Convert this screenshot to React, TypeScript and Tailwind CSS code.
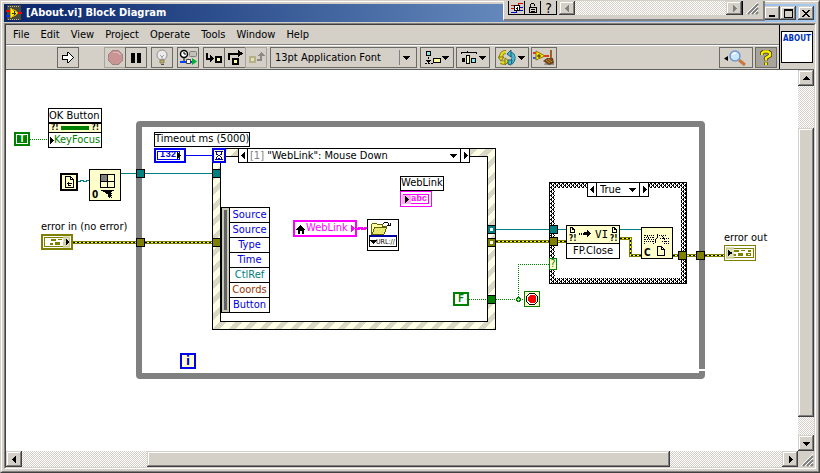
import type { ReactNode } from "react";
import { clsx } from "clsx";

const raised =
  "bg-[#d4d0c8] shadow-[inset_-1px_-1px_0_#404040,inset_1px_1px_0_#d4d0c8,inset_-2px_-2px_0_#808080,inset_2px_2px_0_#fff]";
const track = "bg-[conic-gradient(#fff_25%,#d4d0c8_0_50%,#fff_0_75%,#d4d0c8_0)] bg-size-[2px_2px]";
const stripes = "bg-[repeating-linear-gradient(135deg,#ffffe6_0_6px,#d8d8c4_6px_11px)]";

const menus = ["File", "Edit", "View", "Project", "Operate", "Tools", "Window", "Help"];

const eventData = [
  { name: "Source", color: "text-[#0000e0]" },
  { name: "Source", color: "text-[#0000e0]" },
  { name: "Type", color: "text-[#0000e0]" },
  { name: "Time", color: "text-[#0000e0]" },
  { name: "CtlRef", color: "text-[#008080]" },
  { name: "Coords", color: "text-[#993300]" },
  { name: "Button", color: "text-[#0000e0]" },
];

type Dir = "up" | "down" | "left" | "right";

function Arrow({ dir, className }: { dir: Dir; className?: string }) {
  const d = {
    up: "M4 2h1v1h1v1h1v1h1v1H1V5h1V4h1V3h1z",
    down: "M1 3h7v1H7v1H6v1H5v1H4V6H3V5H2V4H1z",
    left: "M6 1v7H5V7H4V6H3V5H2V4h1V3h1V2h1V1z",
    right: "M3 1v7h1V7h1V6h1V5h1V4H6V3H5V2H4V1z",
  }[dir];
  return (
    <svg viewBox="0 0 9 9" className={clsx("size-[9px] shrink-0", className)} fill="currentColor" shapeRendering="crispEdges" aria-hidden>
      <path d={d} />
    </svg>
  );
}

function Icon({ w, h, children }: { w: number; h: number; children: ReactNode }) {
  return (
    <svg width={w} height={h} viewBox={`0 0 ${w} ${h}`} fill="none" shapeRendering="crispEdges" className="shrink-0 overflow-visible" aria-hidden>
      {children}
    </svg>
  );
}

function ToolButton(props: { label: string; className: string; disabled?: boolean; children: ReactNode }) {
  return (
    <button
      type="button"
      aria-label={props.label}
      disabled={props.disabled}
      className={clsx(
        "flex h-[21px] shrink-0 items-center justify-center border",
        props.disabled ? "border-[#a8a49c]" : "border-[#6c6a66]",
        props.className
      )}
    >
      {props.children}
    </button>
  );
}

function LabviewIcon() {
  return (
    <Icon w={16} h={16}>
      <path d="M1 0h14v15H1z" fill="#4a4a3c" />
      <path d="M2 1h12M2 14h12" stroke="#b8b8a0" strokeDasharray="1 1" />
      <path d="M4 3l9 5-9 5z" fill="#ffee00" stroke="#c8a800" />
      <path d="M0 5.500h4M12 7.500h4" stroke="#f00000" strokeWidth="2" />
      <path d="M0 10.500h4" stroke="#0030ff" strokeWidth="2" />
      <path d="M6 8h4M8 6v4" stroke="#303000" />
    </Icon>
  );
}

function TitleBar() {
  return (
    <header className="flex h-[18px] items-center bg-linear-to-r from-[#0a246a] to-[#a6caf0] pl-0.5 pr-0.5">
      <LabviewIcon />
      <h1 className="ml-1 flex-1 text-[11px] leading-[18px] font-bold whitespace-nowrap text-white">[About.vi] Block Diagram</h1>
      <button type="button" aria-label="Minimize" className={clsx("flex h-[14px] w-4 items-center justify-center", raised)}>
        <Icon w={8} h={8}>
          <path d="M1 6h6v2H1z" fill="#000" />
        </Icon>
      </button>
      <button type="button" aria-label="Maximize" className={clsx("flex h-[14px] w-4 items-center justify-center", raised)}>
        <Icon w={9} h={9}>
          <path d="M0 0h9v9H0zM1 2v6h7V2z" fill="#000" fillRule="evenodd" />
        </Icon>
      </button>
      <button type="button" aria-label="Close" className={clsx("ml-0.5 flex h-[14px] w-4 items-center justify-center", raised)}>
        <Icon w={8} h={7}>
          <path d="M0 0h2v1h1v1h2V1h1V0h2v1H7v1H6v1H5v1h1v1h1v1h1v1H6V6H5V5H3v1H2v1H0V6h1V5h1V4h1V3H2V2H1V1H0z" fill="#000" />
        </Icon>
      </button>
    </header>
  );
}

function Grip() {
  return (
    <svg viewBox="0 0 16 16" className="size-4 shrink-0 bg-[#d4d0c8]" aria-hidden>
      <path d="M5 15L15 5M9 15l6-6M13 15l2-2" stroke="#808080" strokeWidth="2" />
      <path d="M3 15L15 3M7 15l8-8M11 15l4-4" stroke="#fff" />
    </svg>
  );
}

// floating tool strip that hangs over the title bar
function ToolStrip() {
  const cell = "flex h-[14px] w-4 items-center justify-center border-r border-b border-black bg-[#d4d0c8]";
  return (
    <div className="absolute top-0 right-[54px] flex h-5 w-[262px] border-r-2 border-b-2 border-l border-[#808080] border-l-white bg-[#d4d0c8] pr-1 pl-1">
      <div className="flex h-[14px] w-full border-l border-black">
        <button type="button" aria-label="Connections" className={cell}>
          <Icon w={14} h={12}>
            <path d="M1 3.500h4M1 6.500h4" stroke="#e00000" />
            <path d="M1 10.500h5v-2M9 5.500h4M9 8.500h4" stroke="#0000e0" />
            <path d="M8 2.500V1h5" stroke="#e00000" />
            <path d="M4.500 3.500h5v5h-5z" fill="#fff" stroke="#000" />
            <path d="M6 6.500h2M7.500 5v3" stroke="#000" />
          </Icon>
        </button>
        <button type="button" aria-label="Lock" className={cell}>
          <Icon w={10} h={12}>
            <path d="M2.500 5V2.500l1-1h2l1 1V4" stroke="#000" />
            <path d="M1.500 5.500h7v5h-7zM3 7.500h4M3 9.500h4" stroke="#000" />
          </Icon>
        </button>
        <button type="button" aria-label="Help" className={clsx(cell, "text-[14px] leading-3")}>
          ?
        </button>
        <button type="button" aria-label="Scroll left" className={clsx("ml-0.5 flex w-4 items-center justify-center text-[#808080]", raised)}>
          <Arrow dir="left" />
        </button>
        <div className={clsx("flex-1", track)} />
        <button type="button" aria-label="Scroll right" className={clsx("flex w-4 items-center justify-center text-[#808080]", raised)}>
          <Arrow dir="right" />
        </button>
        <div className="flex h-[14px] items-end overflow-hidden border-l border-black">
          <Grip />
        </div>
      </div>
    </div>
  );
}

function Toolbar() {
  return (
    <div className="flex h-6 items-center border-t border-white pr-0.5 pl-[51px]">
      <ToolButton label="Run" className="w-[22px]">
        <Icon w={14} h={13}>
          <path d="M1.500 4.500h5v-3l1 0 5 5-5 5-1 0v-3h-5z" fill="#fff" stroke="#000" />
        </Icon>
      </ToolButton>
      <ToolButton label="Abort" disabled className="ml-[25px] w-[22px]">
        <Icon w={15} h={15}>
          <path d="M4.500.500h6l4 4v6l-4 4h-6l-4-4v-6z" fill="#c89494" stroke="#a08484" />
          <path d="M5 2.500h5l2.500 2.500" stroke="#dcb4b4" />
        </Icon>
      </ToolButton>
      <ToolButton label="Pause" className="-ml-px w-[22px]">
        <Icon w={10} h={10}>
          <path d="M0 0h4v10H0zM6 0h4v10H6z" fill="#000" />
        </Icon>
      </ToolButton>
      <ToolButton label="Highlight execution" className="ml-1 w-[22px]">
        <svg viewBox="0 0 14 17" className="h-[17px] w-[14px]" fill="none" aria-hidden>
          <circle cx="7" cy="6" r="5" fill="#ececec" stroke="#909090" />
          <path d="M5 6l2 2 2-2M7 8v3" stroke="#a0a0a0" />
          <path d="M5 11h4v3H5z" fill="#c8b060" stroke="#84805c" />
          <path d="M6 15.500h3" stroke="#505050" />
        </svg>
      </ToolButton>
      <ToolButton label="Retain wire values" className="ml-1 w-[22px]">
        <svg viewBox="0 0 18 17" className="h-[17px] w-[18px]" fill="none" aria-hidden>
          <circle cx="5" cy="5" r="3.500" fill="#fff" stroke="#000" strokeWidth="1.500" />
          <path d="M5 3v2h2M5 9v4" stroke="#000" />
          <rect x="10.500" y="2.500" width="7" height="5" rx="1" fill="#c4c0b8" stroke="#808080" />
          <path d="M1 13h13" stroke="#0040ff" strokeWidth="2" />
          <path d="M7.500 10.500h4v4h-4z" fill="#fff" stroke="#404040" />
          <path d="M13 9v7l5-3.500z" fill="#00b030" />
        </svg>
      </ToolButton>
      <ToolButton label="Step into" className="ml-1 w-[22px]">
        <Icon w={18} h={14}>
          <path d="M2 2v6h5" stroke="#000" strokeWidth="2" />
          <path d="M5 4v7l4-3.500z" fill="#000" />
          <path d="M11 6h5v5h-5z" fill="#ffffa0" stroke="#000" strokeWidth="2" />
        </Icon>
      </ToolButton>
      <ToolButton label="Step over" className="-ml-px w-[22px]">
        <Icon w={17} h={16}>
          <path d="M2 10V4h11" stroke="#000" strokeWidth="2" />
          <path d="M11 0v7l5-3.500z" fill="#000" />
          <path d="M6 9h5v5H6z" fill="#ffffa0" stroke="#000" strokeWidth="2" />
        </Icon>
      </ToolButton>
      <ToolButton label="Step out" disabled className="-ml-px w-[22px]">
        <Icon w={17} h={14}>
          <path d="M2 6h5v5H2z" fill="#e4e0b0" stroke="#b4b088" strokeWidth="2" />
          <path d="M9 9h4V4" stroke="#8c8a84" strokeWidth="2" />
          <path d="M10 5h7l-3.500-4z" fill="#8c8a84" />
        </Icon>
      </ToolButton>
      <div className="relative ml-[3px] h-[21px] w-[147px] shrink-0 border border-[#6c6a66]">
        <select aria-label="Text settings" className="h-full w-full appearance-none pl-1 text-[11px] leading-[19px] outline-none">
          <option>13pt Application Font</option>
        </select>
        <span className="pointer-events-none absolute inset-y-0.5 right-0 flex w-[17px] items-center justify-center border-l border-[#808080] pr-1">
          <Arrow dir="down" />
        </span>
      </div>
      <ToolButton label="Align objects" className="ml-[3px] w-[34px]">
        <Icon w={17} h={16}>
          <path d="M2.500 1.500h4v4h-4z" fill="#80e8f0" stroke="#000" />
          <path d="M4.500 7v5M1 13.500h8" stroke="#000" strokeDasharray="2 1" />
          <path d="M2 10h5v1H6v1H5v1H4v-1H3v-1H2z" fill="#000" />
          <path d="M9.500 8.500h7v4h-7z" fill="#ffffa0" stroke="#000" />
        </Icon>
        <Arrow dir="down" />
      </ToolButton>
      <ToolButton label="Distribute objects" className="ml-0.5 w-[34px]">
        <Icon w={18} h={16}>
          <path d="M1.500 4V2.500h6V1M7.500 2.500h9V4" stroke="#000" />
          <path d="M2 8h3v4H2z" fill="#000" />
          <path d="M6.500 5.500h3v8h-3z" fill="#ffffa0" stroke="#000" />
          <path d="M11.500 8.500h4v4h-4z" fill="#80e8f0" stroke="#000" />
        </Icon>
        <Arrow dir="down" />
      </ToolButton>
      <ToolButton label="Reorder" className="ml-[5px] w-[34px]">
        <svg viewBox="0 0 19 16" className="h-4 w-[19px] shrink-0" fill="none" aria-hidden>
          <path d="M8 2C4 2 3 4 3 8" stroke="#807800" strokeWidth="4" />
          <path d="M3 12c2 1 3 1 5 0" stroke="#807800" strokeWidth="4" />
          <path d="M8 2C4 2 3 4 3 8M3 12c2 1 3 1 5 0" stroke="#e8d828" strokeWidth="2.500" />
          <path d="M0 7h6l-3 4zM7 8v7l4-4z" fill="#e8d828" stroke="#807800" />
          <path d="M12 4c4 0 5 5 1 9" stroke="#186078" strokeWidth="4" />
          <path d="M12 4c4 0 5 5 1 9" stroke="#48b8d0" strokeWidth="2.500" />
          <path d="M13 0v7L9 4zM10 10h4l-1 5-3-1z" fill="#48b8d0" stroke="#186078" />
        </svg>
        <Arrow dir="down" />
      </ToolButton>
      <ToolButton label="Clean up diagram" className="ml-0.5 w-[26px]">
        <svg viewBox="0 0 24 18" className="h-[18px] w-6" fill="none" aria-hidden>
          <path d="M1 4h4M11 7h6" stroke="#f00000" strokeWidth="1.500" />
          <path d="M1 9h4" stroke="#0030ff" strokeWidth="1.500" />
          <path d="M4 2l9 5-9 4z" fill="#ffee00" stroke="#907000" />
          <path d="M7 5v4M5 7h4" stroke="#302800" />
          <path d="M12 16h10v-2h-9z" fill="#909088" />
          <path d="M18 1h2v8h-2z" fill="#a06020" />
          <path d="M15 9h6l1 5-5 2-6-4z" fill="#70441c" />
          <path d="M14 11l4 3M16 10l4 3" stroke="#c89028" />
        </svg>
      </ToolButton>
      <div className="flex-1" />
      <ToolButton label="Search" className="w-[34px]">
        <svg viewBox="0 0 26 18" className="h-[18px] w-[26px]" fill="none" aria-hidden>
          <path d="M5 7v5L1 9.500z" fill="#000" />
          <path d="M16 11l6 5" stroke="#c87840" strokeWidth="3" />
          <circle cx="12" cy="7" r="5" fill="#cce8ff" stroke="#7098d0" strokeWidth="1.500" />
          <path d="M9 6c1-2 2-2 4-2" stroke="#fff" strokeWidth="1.500" />
        </svg>
      </ToolButton>
      <button
        type="button"
        aria-label="Context help"
        aria-pressed
        className="ml-0.5 flex h-[21px] w-[22px] items-center justify-center border border-[#6c6a66] bg-[#a8a49c]"
      >
        <svg viewBox="0 0 12 16" className="h-4 w-3" fill="none" aria-hidden>
          <path d="M2 5V3l2-1.500h4L10 3v2.500L6 8v2.500M6 12.500v2.500" stroke="#303000" strokeWidth="4" />
          <path d="M2 5V3l2-1.500h4L10 3v2.500L6 8v2.500M6 12.500v2.500" stroke="#ffee00" strokeWidth="2.500" />
        </svg>
      </button>
    </div>
  );
}

function Wires() {
  const error = ["M67 172.500H206", "M490 171.500H560", "M614 168.500H624.500V185.500H635", "M667 185.500H718"];
  return (
    <svg className="absolute top-0 left-0 h-[381px] w-[792px]" fill="none" shapeRendering="crispEdges" aria-hidden>
      <path d="M115 103.500H206M490 159.500H560M614 159.500H635" stroke="#008080" />
      <path d="M72 111.500h2v-1h3v1h3v-1h3" stroke="#008080" />
      <path d="M180 85.500H206" stroke="#0000f0" />
      {error.map((d) => (
        <g key={d}>
          <path d={d} stroke="#808000" strokeWidth="3" />
          <path d={d} stroke="#ffff20" />
          <path d={d} stroke="#000" strokeDasharray="2 2" />
        </g>
      ))}
      <path d="M24 69.500H42M463 229.500H481M490 229.500H518M512.500 229V194.500H543" stroke="#008000" strokeDasharray="1 1" />
      <path d="M511 227h3v1h1v3h-1v1h-3v-1h-1v-3h1z" fill="#008000" />
      <path d="M511 229h3M512.500 228v3" stroke="#b0e0b0" />
      <path d="M351 158.500h2v-1h3v1h3v-1h2" stroke="#f0f" strokeWidth="2" />
    </svg>
  );
}

function Tunnel({ className, hollow }: { className: string; hollow?: boolean }) {
  return (
    <div className={clsx("absolute flex size-[9px] items-center justify-center border border-black", className)}>
      {hollow && <i className="size-[3px] bg-white" />}
    </div>
  );
}

function Label({ className, children }: { className: string; children: ReactNode }) {
  return (
    <div className={clsx("absolute flex h-[15px] items-center border border-black bg-white whitespace-nowrap", className)}>
      {children}
    </div>
  );
}

function ErrorCluster({ className, out }: { className: string; out?: boolean }) {
  return (
    <div className={clsx("absolute h-4 w-8 border-[#808000] bg-white", out ? "border" : "border-2", className)}>
      <svg viewBox="0 0 28 12" className="h-full w-full" fill="none" shapeRendering="crispEdges" aria-hidden>
        <path d="M1.500 1.500h25v9h-25z" stroke="#808000" />
        <path d="M8 3h5v2H8zM15 3h4v1h-4zM21 3h3v2h-3zM7 7h3v2H7zM12 6h5v3h-5zM20 6h4v3h-4z" fill="#808000" />
        <path d="M21 7h2v1h-2z" fill="#fff" />
        <path d={out ? "M1 0h7v12H1z" : "M20 0h7v12h-7z"} fill="#d8d8b4" fillOpacity=".8" />
        <path d={out ? "M3 3v6l4-3z" : "M23 3v6l4-3z"} fill="#000" />
      </svg>
    </div>
  );
}

function EventStructure() {
  return (
    <div className={clsx("absolute top-[78px] left-[206px] h-[182px] w-[284px] border border-black p-[7px]", stripes)}>
      <div className="h-full w-full border border-black bg-white" />
      <div className="absolute -top-px left-[25px] flex h-[15px] w-[232px] items-center border border-black bg-white">
        <button type="button" aria-label="Previous event case" className="flex w-2 justify-center">
          <Arrow dir="left" />
        </button>
        <button
          type="button"
          aria-haspopup="listbox"
          className="flex h-[13px] flex-1 items-center justify-between border-x border-black pr-0.5 pl-0.5 leading-[13px] whitespace-nowrap"
        >
          <span>
            <span className="text-[#808080]">[1]</span> "WebLink": Mouse Down
          </span>
          <Arrow dir="down" />
        </button>
        <button type="button" aria-label="Next event case" className="flex w-2 justify-center">
          <Arrow dir="right" />
        </button>
      </div>
      <div className="absolute top-[58px] left-2 flex border border-black bg-[#c8c8b8]">
        <div className="w-[7px] bg-[#c8c8b8] py-0.5 pl-0.5">
          <div className="h-full w-[3px] bg-[#606060]" />
        </div>
        <ul className="w-10 divide-y divide-black border-l border-black bg-white text-center leading-[14px]">
          {eventData.map((e, i) => (
            <li key={i} className={e.color}>
              {e.name}
            </li>
          ))}
        </ul>
      </div>
    </div>
  );
}

function CaseStructure() {
  return (
    <div className="absolute top-[112px] left-[543px] h-[102px] w-[138px] border border-black p-[5px]">
      <svg className="absolute inset-0 h-full w-full" shapeRendering="crispEdges" aria-hidden>
        <pattern id="hatch" width="4" height="4" patternUnits="userSpaceOnUse">
          <path d="M0 0h4v4H0z" fill="#fff" />
          <path d="M0 0h2v1H0zM1 1h1v1H1zM3 1h1v1H3zM2 2h2v1H2zM1 3h1v1H1zM3 3h1v1H3z" fill="#000" />
        </pattern>
        <rect width="100%" height="100%" fill="url(#hatch)" />
      </svg>
      <div className="relative h-full w-full bg-white" />
      <div className="absolute -top-px left-[37px] flex h-[15px] w-[62px] items-center border border-black bg-white">
        <button type="button" aria-label="Previous case" className="flex w-2 justify-center">
          <Arrow dir="left" />
        </button>
        <div className="relative flex h-[13px] flex-1 border-x border-black">
          <select aria-label="Case" className="w-full appearance-none pl-[3px] leading-[13px] outline-none">
            <option>True</option>
            <option>False</option>
          </select>
          <Arrow dir="down" className="pointer-events-none absolute top-0.5 right-0.5" />
        </div>
        <button type="button" aria-label="Next case" className="flex w-2 justify-center">
          <Arrow dir="right" />
        </button>
      </div>
    </div>
  );
}

function PageGlyph({ x, y }: { x: number; y: number }) {
  return <path transform={`translate(${x} ${y})`} d="M.500.500h2l2 2v3h-4zM2.500.500v2h2" stroke="#000" />;
}

function Diagram() {
  return (
    <main className="relative min-w-0 flex-1 overflow-hidden bg-white">
      {/* while loop */}
      <div className="absolute top-[51px] left-[130px] h-[258px] w-[569px] rounded-[4px] border-6 border-[#808080]" />
      <div className="absolute top-[299px] left-[693px] h-0.5 w-[6px] bg-white" />
      <EventStructure />
      <CaseStructure />
      <Wires />

      <Tunnel className="top-[99px] left-[130px] bg-[#008080]" />
      <Tunnel className="top-[99px] left-[206px] bg-[#008080]" />
      <Tunnel className="top-[168px] left-[130px] bg-[#808000]" />
      <Tunnel className="top-[168px] left-[206px] bg-[#808000]" />
      <Tunnel hollow className="top-[155px] left-[481px] bg-[#008080]" />
      <Tunnel hollow className="top-[168px] left-[481px] bg-[#808000]" />
      <Tunnel className="top-[225px] left-[481px] bg-[#008000]" />
      <Tunnel className="top-[155px] left-[543px] bg-[#008080]" />
      <Tunnel className="top-[167px] left-[543px] bg-[#808000]" />
      <Tunnel className="top-[181px] left-[672px] bg-[#808000]" />
      <Tunnel className="top-[181px] left-[690px] bg-[#808000]" />

      {/* property node */}
      <div className="absolute top-[62px] left-2 flex h-[14px] w-4 border-2 border-[#008000] bg-white p-px">
        <span className="w-full bg-[#008000] text-center font-['DejaVu_Sans_Mono',monospace] text-[10px] leading-2 font-bold text-white">T</span>
      </div>
      <div className="absolute top-[38px] left-[42px] h-10 w-[54px] border border-black bg-white whitespace-nowrap">
        <div className="h-[14px] border-b border-black leading-[13px]">OK Button</div>
        <div className="flex h-[10px] items-center justify-between border-y border-black bg-[#ffffcc] px-0.5 text-[8px] leading-2 font-bold">
          <span>?!</span>
          <span className="h-1 w-7 bg-[#008000]" />
          <span>?!</span>
        </div>
        <div className="flex items-center leading-[14px] text-[#008000]">
          <Arrow dir="right" className="-ml-0.5 text-black" />
          <span className="-ml-0.5">KeyFocus</span>
        </div>
      </div>

      {/* open reference */}
      <div className="absolute top-[103px] left-[54px] flex size-[18px] items-center justify-center border-2 border-black bg-[#ffffcc]">
        <Icon w={11} h={12}>
          <path d="M1.500.500h5l3 3v8h-8zM6.500.500v3h3M3 7.500h5M4.500 6v3h2" stroke="#000" />
        </Icon>
      </div>
      <div className="absolute top-[99px] left-[83px] size-8 border border-black bg-[#ffffcc]">
        <Icon w={30} h={30}>
          <path d="M10 4h7v7h-7z" fill="#808080" />
          <path d="M10.500 4.500h14v13h-14zM17.500 4v14M10 11.500h15M11 20.500h13" stroke="#000" />
          <path d="M12 20h9v2h-8zM14 22h7v2h-5zM18 24h3v3h-3z" fill="#000" />
          <path d="M21.500 21v6h-3" stroke="#000" strokeDasharray="1 1" />
          <text x="2" y="28" fill="#000" fontSize="10" fontWeight="bold">0</text>
        </Icon>
      </div>

      <span className="absolute top-[149px] left-[35px] leading-4 whitespace-nowrap">error in (no error)</span>
      <ErrorCluster className="top-[164px] left-[35px]" />

      {/* timeout */}
      <Label className="top-[62px] left-[148px]">Timeout ms (5000)</Label>
      <div className="absolute top-[78px] left-[148px] flex h-[15px] w-8 items-center border-2 border-[#0000f0] bg-white p-px">
        <span className="h-[9px] w-[25px] border border-[#0000f0] pl-0.5 font-['Liberation_Mono',monospace] text-[9px] leading-[7px] font-bold text-[#0000f0]">
          I32
        </span>
        <Arrow dir="right" className="-ml-1.5" />
      </div>
      <div className="absolute top-[78px] left-[206px] flex h-[15px] w-[14px] items-center justify-center border-2 border-[#0000f0] bg-[#ffffcc]">
        <Icon w={8} h={9}>
          <path d="M0 .500h8M0 8.500h8M1.500 1v2l2 1.500-2 2v2M6.500 1v2l-2 1.500 2 2v2M3 7.500h2" stroke="#0000a0" />
        </Icon>
      </div>

      {/* local variable and browser call */}
      <div className="absolute top-[150px] left-[287px] flex h-[17px] w-16 items-center border-2 border-[#f0f] bg-white text-[#f0f]">
        <Icon w={11} h={10}>
          <path d="M5 1h1v1h1v1h1v1h1v1h1v1H9v4H7V7H5v3H3V6H1V5h1V4h1V3h1V2h1z" fill="#000" />
        </Icon>
        <span>WebLink</span>
        <Arrow dir="right" />
      </div>
      <div className="absolute top-[149px] left-[361px] size-8 border border-black bg-white">
        <Icon w={30} h={17}>
          <path d="M3.500 14.500v-10l1-1h4l1 1h5v2h4l-4 8z" fill="#ffffa0" stroke="#606000" />
          <path d="M4 14l3-7h12l-3 7z" fill="#e8e870" stroke="#606000" />
          <path d="M14.500 4.500l2-2h3l2 3M19 5.500h3v-3" stroke="#000" />
        </Icon>
        <div className="-mt-0.5 mx-px flex h-3 items-center border border-t-2 border-black border-t-[#0000a0] text-[7px] leading-2">
          <Arrow dir="down" className="-ml-px" />
          <span className="-ml-0.5">URL://</span>
        </div>
      </div>

      <Label className="top-[106px] left-[394px]">WebLink</Label>
      <div className="absolute top-[121px] left-[394px] h-4 w-8 border border-[#f0f] bg-white p-0.5">
        <div className="flex h-[10px] items-center border border-[#f0f]">
          <Arrow dir="right" className="-ml-0.5 bg-[#f8b0f0]" />
          <span className="font-['Liberation_Mono',monospace] text-[9px] leading-2 font-bold text-[#f0f]">abc</span>
        </div>
      </div>

      {/* stop logic */}
      <div className="absolute top-[222px] left-[447px] h-[14px] w-4 border-2 border-[#008000] bg-white text-center font-['DejaVu_Sans_Mono',monospace] text-[10px] leading-[10px] font-bold text-[#008000]">
        F
      </div>
      <div className="absolute top-[221px] left-[518px] flex size-4 items-center justify-center border border-[#008000] bg-[#ffffcc]">
        <Icon w={12} h={12}>
          <path d="M3.500.500h5l3 3v5l-3 3h-5l-3-3v-5z" fill="#fff" stroke="#000" />
          <path d="M4 2h4l2 2v4l-2 2H4L2 8V4z" fill="#f00" />
        </Icon>
      </div>
      <div className="absolute top-[188px] left-[543px] h-3 w-2 border border-[#008000] bg-[#ffffcc] text-center text-[10px] leading-[10px] text-[#008000]">
        ?
      </div>
      <div className="absolute top-[283px] left-[174px] size-4 border-2 border-[#0000f0] bg-[#ffffcc] text-center text-[13px] leading-3 font-bold text-[#0000f0]">
        i
      </div>

      {/* FP.Close */}
      <div className="absolute top-[155px] left-[560px] h-[34px] w-[54px] border border-black bg-white text-center">
        <div className="h-[18px] border-b border-black bg-[#ffffcc]">
          <Icon w={52} h={17}>
            <PageGlyph x={3} y={1} />
            <PageGlyph x={45} y={1} />
            <path d="M12 7.500h8" stroke="#000" strokeWidth="2" strokeDasharray="1 1" />
            <path d="M17 6h3V4l4 3.500-4 3.500V9h-3z" fill="#000" />
            <text x="28" y="12" fill="#000" fontSize="11" fontFamily="DejaVu Sans Mono">VI</text>
            <text x="2" y="15" fill="#000" fontSize="8" fontWeight="bold">?!</text>
            <text x="43" y="15" fill="#000" fontSize="8" fontWeight="bold">?!</text>
          </Icon>
        </div>
        <div className="leading-[14px]">FP.Close</div>
      </div>

      {/* close reference */}
      <div className="absolute top-[157px] left-[635px] size-8 border border-black bg-[#ffffcc]">
        <Icon w={30} h={30}>
          <path d="M3 7.500h8M2 9.500h10M3 11.500h8M2 13.500h10M17 7.500h7M18 10.500h9M20 13.500h8M22 15.500h6" stroke="#000" strokeDasharray="1 1" />
          <path d="M2.500 7v9M11.500 7v9M5 8l3 4M20 8l4 6" stroke="#000" strokeDasharray="1 1" />
          <path d="M13.500 15v-3l2-3V6" stroke="#000" />
          <path d="M15.500 18.500h4l3 3v6h-7zM19.500 18.500v3h3" stroke="#000" />
          <text x="2" y="28" fill="#000" fontSize="10" fontWeight="bold">C</text>
        </Icon>
      </div>

      <span className="absolute top-[160px] left-[718px] leading-4 whitespace-nowrap">error out</span>
      <ErrorCluster out className="top-[175px] left-[718px]" />
    </main>
  );
}

export default function App() {
  return (
    <div className="relative flex h-screen min-h-[380px] flex-col border border-[#d4d0c8] border-r-[#404040] border-b-[#404040] bg-[#d4d0c8] font-[Tahoma,'DejaVu_Sans_Condensed',sans-serif] text-[11px] text-black">
      <div className="flex min-h-0 flex-1 flex-col border border-white border-r-[#808080] border-b-[#808080] p-0.5">
        <TitleBar />
        <div className="mt-px flex min-h-0 flex-1 flex-col border border-[#808080] border-r-white border-b-white">
          <div className="flex min-h-0 flex-1 flex-col border border-[#404040] border-r-[#d4d0c8] border-b-[#d4d0c8]">
            <div className="flex border-b border-[#606060]">
              <div className="min-w-0 flex-1">
                <nav className="flex h-5 items-center gap-[11px] border-b border-[#808080] pl-[7px]">
                  {menus.map((m) => (
                    <button key={m} type="button" className="leading-4">
                      {m}
                    </button>
                  ))}
                </nav>
                <Toolbar />
              </div>
              <div className="w-[35px] border-l border-black px-px pt-[6px]">
                <div className="h-8 w-8 border border-black bg-white pt-[3px] text-center text-[8px] leading-2 font-bold text-[#0030c0]">
                  ABOUT
                </div>
              </div>
            </div>

            <div className="flex min-h-0 flex-1">
              <Diagram />
              <div className={clsx("flex w-4 flex-col", track)}>
                <button type="button" aria-label="Scroll up" className={clsx("flex h-4 items-center justify-center", raised)}>
                  <Arrow dir="up" />
                </button>
                <div className="flex min-h-0 flex-1 flex-col pt-[42px] pb-[18px]">
                  <div className={clsx("flex-1", raised)} />
                </div>
                <button type="button" aria-label="Scroll down" className={clsx("flex h-4 items-center justify-center", raised)}>
                  <Arrow dir="down" />
                </button>
              </div>
            </div>

            <div className="flex h-4">
              <div className={clsx("flex flex-1", track)}>
                <button type="button" aria-label="Scroll left" className={clsx("flex w-4 items-center justify-center", raised)}>
                  <Arrow dir="left" />
                </button>
                <div className="flex flex-1 pr-28 pl-[125px]">
                  <div className={clsx("flex-1", raised)} />
                </div>
                <button type="button" aria-label="Scroll right" className={clsx("flex w-4 items-center justify-center", raised)}>
                  <Arrow dir="right" />
                </button>
              </div>
              <Grip />
            </div>
          </div>
        </div>
      </div>
      <ToolStrip />
    </div>
  );
}
